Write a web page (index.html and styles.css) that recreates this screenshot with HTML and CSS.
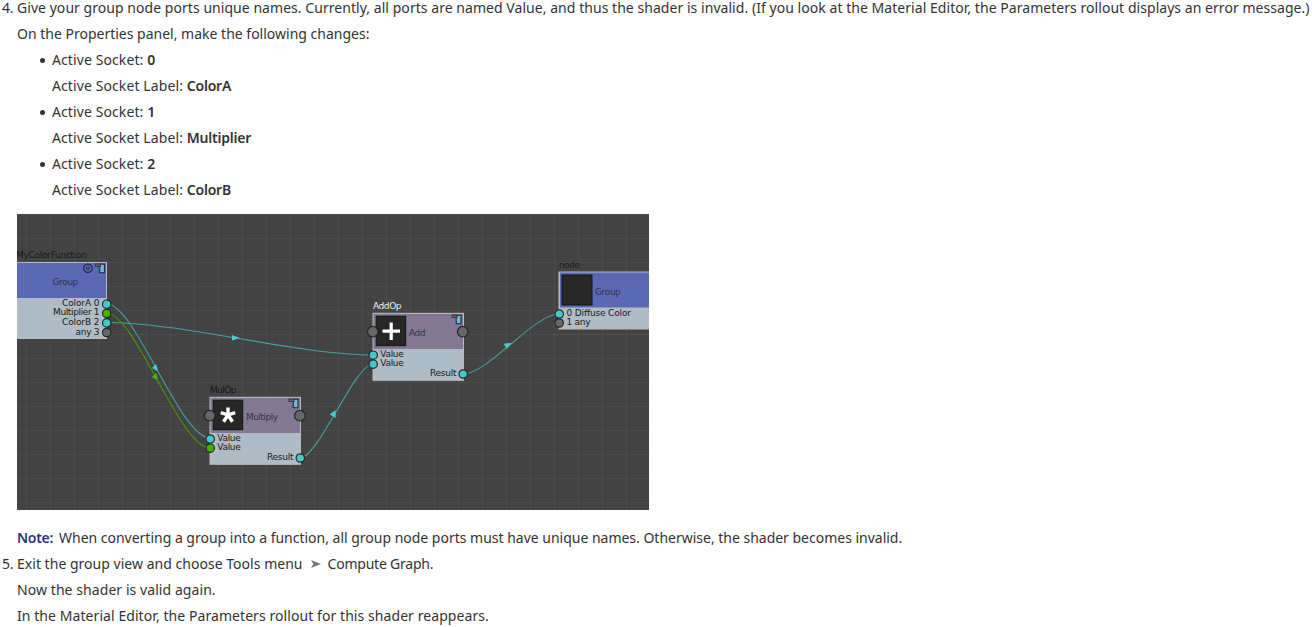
FILE: index.html
```
<!DOCTYPE html>
<html lang="en">
<head>
<meta charset="utf-8">
<title>Shader group ports</title>
<link rel="stylesheet" href="styles.css">
</head>
<body>
<main class="steps">
  <section class="step">
    <span class="num">4.</span>
    <div class="content">
      <p class="lead">Give your group node ports unique names. Currently, all ports are named Value, and thus the shader is invalid. (If you look at the Material Editor, the Parameters rollout displays an error message.)</p>
      <p>On the Properties panel, make the following changes:</p>
      <ul class="sockets">
        <li><p>Active Socket: <b>0</b></p><p>Active Socket Label: <b>ColorA</b></p></li>
        <li><p>Active Socket: <b>1</b></p><p>Active Socket Label: <b>Multiplier</b></p></li>
        <li><p>Active Socket: <b>2</b></p><p>Active Socket Label: <b>ColorB</b></p></li>
      </ul>
      <svg class="graph" width="632" height="296" viewBox="17 214 632 296">
        <defs>
          <pattern id="grid" x="26" y="238" width="24" height="24" patternUnits="userSpaceOnUse">
            <path d="M.5 0V24M0 .5H24" stroke="#4b4b4b" fill="none"/>
          </pattern>
          <g id="badge">
            <rect x="4.2" y=".7" width="4.8" height="8.5" fill="#70b9d9" stroke="#223541" stroke-width="1.2"/>
            <rect x="0" y=".5" width="5" height="2.5" fill="#666276" stroke="#393847"/>
          </g>
        </defs>
        <rect x="17" y="214" width="632" height="296" fill="#434343"/>
        <rect x="17" y="214" width="632" height="296" fill="url(#grid)"/>

        <rect x="10" y="262.5" width="96.5" height="76" fill="#b0bcc5" stroke="#b9b9bd"/>
        <rect x="10" y="263" width="96" height="35" fill="#5b69b4"/>
        <rect x="559" y="272" width="96" height="57" fill="#b0bcc5" stroke="#b9b9bd"/>
        <rect x="560" y="272.5" width="95" height="35" fill="#5b69b4"/>
        <rect x="562" y="275" width="30" height="30" fill="#272727" stroke="#141414"/>
        <rect x="373" y="313.3" width="90.5" height="67" fill="#b0bcc5" stroke="#b9b9bd"/>
        <rect x="373.5" y="314" width="89.5" height="35" fill="#837894"/>
        <rect x="376.2" y="316.2" width="29.5" height="29.5" fill="#272727" stroke="#141414"/>
        <rect x="210" y="397.3" width="90.5" height="67" fill="#b0bcc5" stroke="#b9b9bd"/>
        <rect x="210.5" y="398" width="89.5" height="35" fill="#837894"/>
        <rect x="213.2" y="400.2" width="29.5" height="29.5" fill="#272727" stroke="#141414"/>

        <g fill="none" stroke="#45a09e" stroke-width="1.1">
          <path d="M107 304C135 304 180 438 210 438"/>
          <path d="M107 322.5C180 322.5 300 355 373 355"/>
          <path d="M300 458C318 458 355 364 373 364"/>
          <path d="M463 374C488 374 534 314 559 314"/>
          <path d="M107 313.5C135 313.5 180 448 210 448" stroke="#43940f"/>
        </g>
        <g fill="#4bcaca">
          <path d="M232 335L240 338L232 340.500Z"/>
          <path d="M151.800 368L156.300 364L158 371.500Z"/>
          <path d="M329.700 414.500L335.500 410L335.700 418Z"/>
          <path d="M503.700 343.800L511.500 342.700L506.700 349Z"/>
          <path d="M151.800 377L156.300 373L158 380.500Z" fill="#43b50b"/>
        </g>

        <g stroke="#202729" stroke-width="1.2">
          <g fill="#686868">
            <circle cx="106.700" cy="332.500" r="4.200"/><circle cx="559.200" cy="323" r="4.200"/>
            <circle cx="372.700" cy="331.700" r="5.300"/><circle cx="462.700" cy="331.700" r="5.300"/>
            <circle cx="209.700" cy="415.700" r="5.300"/><circle cx="299.900" cy="415.700" r="5.300"/>
          </g>
          <g fill="#47c8c6">
            <circle cx="106.700" cy="304.200" r="4.200"/><circle cx="106.700" cy="322.900" r="4.200"/>
            <circle cx="373.200" cy="355.200" r="4.200"/><circle cx="373.200" cy="364.200" r="4.200"/>
            <circle cx="463.200" cy="374" r="4.200"/><circle cx="210.200" cy="439" r="4.200"/>
            <circle cx="300.300" cy="458" r="4.200"/><circle cx="559.200" cy="314" r="4.200"/>
          </g>
          <g fill="#40b400"><circle cx="106.700" cy="313.300" r="4.200"/><circle cx="210.200" cy="448.200" r="4.200"/></g>
        </g>

        <path d="M391.200 322.500V340M382.500 331.200H400" stroke="#fff" stroke-width="3.200"/>
        <path d="M228 415V407.500M228 415L220.800 412.700M228 415L235.200 412.700M228 415L223.500 421.800M228 415L232.500 421.800" stroke="#fff" stroke-width="3.400"/>
        <circle cx="87.900" cy="268.300" r="4.200" fill="#5b69b4" stroke="#202842" stroke-width="1.300"/>
        <circle cx="87.900" cy="268.300" r="1.400" fill="none" stroke="#202842"/>
        <use href="#badge" x="95.500" y="263.500"/>
        <use href="#badge" x="452" y="314.500"/>
        <use href="#badge" x="289" y="398.500"/>

        <g class="node-text">
          <text x="16" y="258" textLength="71">MyColorFunction</text>
          <text class="dim" x="52.500" y="285" textLength="26">Group</text>
          <text x="62" y="306.300" textLength="37.500">ColorA 0</text>
          <text x="53" y="315.300" textLength="46.500">Multiplier 1</text>
          <text x="62" y="325.300" textLength="37.500">ColorB 2</text>
          <text x="75.500" y="335" textLength="24">any 3</text>
          <text x="210" y="393.300" textLength="26.500">MulOp</text>
          <text class="dim" x="246" y="419.500" textLength="32">Multiply</text>
          <text x="217.300" y="441.300" textLength="23.500">Value</text>
          <text x="217.300" y="450.300" textLength="23.500">Value</text>
          <text x="267" y="460.300" textLength="26.500">Result</text>
          <text class="active" x="373" y="309.300" textLength="28.500">AddOp</text>
          <text class="dim" x="409" y="335.500" textLength="16.500">Add</text>
          <text x="380.300" y="357.300" textLength="23.500">Value</text>
          <text x="380.300" y="366.300" textLength="23.500">Value</text>
          <text x="430" y="376.300" textLength="26.500">Result</text>
          <text x="559" y="268" textLength="21">node</text>
          <text class="dim" x="595" y="294.500" textLength="26">Group</text>
          <text x="566.500" y="316.300" textLength="64.500">0 Diffuse Color</text>
          <text x="566.500" y="325.300" textLength="24">1 any</text>
        </g>
      </svg>
      <p class="note"><b>Note:</b><span>When converting a group into a function, all group node ports must have unique names. Otherwise, the shader becomes invalid.</span></p>
    </div>
  </section>
  <section class="step">
    <span class="num">5.</span>
    <div class="content">
      <p class="menu-path"><span class="source">Exit the group view and choose Tools menu</span><svg width="10" height="8" viewBox="0 0 10 8"><path d="M0 0L10 4L0 8L2.500 4Z" fill="#777"/></svg><span class="target">Compute Graph.</span></p>
      <p class="result">Now the shader is valid again.</p>
      <p class="result">In the Material Editor, the Parameters rollout for this shader reappears.</p>
    </div>
  </section>
</main>
</body>
</html>
```
FILE: styles.css
```
body {
  margin: 0;
  background: #fff;
  overflow: hidden;
  color: #333;
  font: 14px/26px "Noto Sans", sans-serif;
}
.steps { margin-top: -5px; white-space: nowrap; }
.step { display: flex; }
.num { flex: none; width: 15px; padding-left: 2px; letter-spacing: -.3px; }
p { margin: 0; height: 26px; }
b { font-weight: 600; }
.lead { letter-spacing: .046px; }
.sockets { margin: 0; padding: 0 0 0 35px; list-style: none; letter-spacing: .1px; }
.sockets b { letter-spacing: -.2px; }
.sockets li { position: relative; }
.sockets li::before {
  content: "";
  position: absolute;
  left: -12px;
  top: 11px;
  width: 5px;
  height: 5px;
  border-radius: 50%;
  background: #333;
}
.graph { display: block; margin: 11px 0 15px; }
.note { display: flex; gap: 6px; letter-spacing: -.01px; }
.note b { color: #2f3187; letter-spacing: -.3px; }
.menu-path { display: flex; align-items: center; gap: 8px; }
.source { letter-spacing: .025px; }
.target { margin-left: -1px; letter-spacing: -.22px; }
.result { letter-spacing: .07px; }
.node-text { font: 9px "DejaVu Sans", sans-serif; fill: #17191b; }
.node-text .dim { fill: #343446; }
.node-text .active { fill: #f2f2f2; }
```
